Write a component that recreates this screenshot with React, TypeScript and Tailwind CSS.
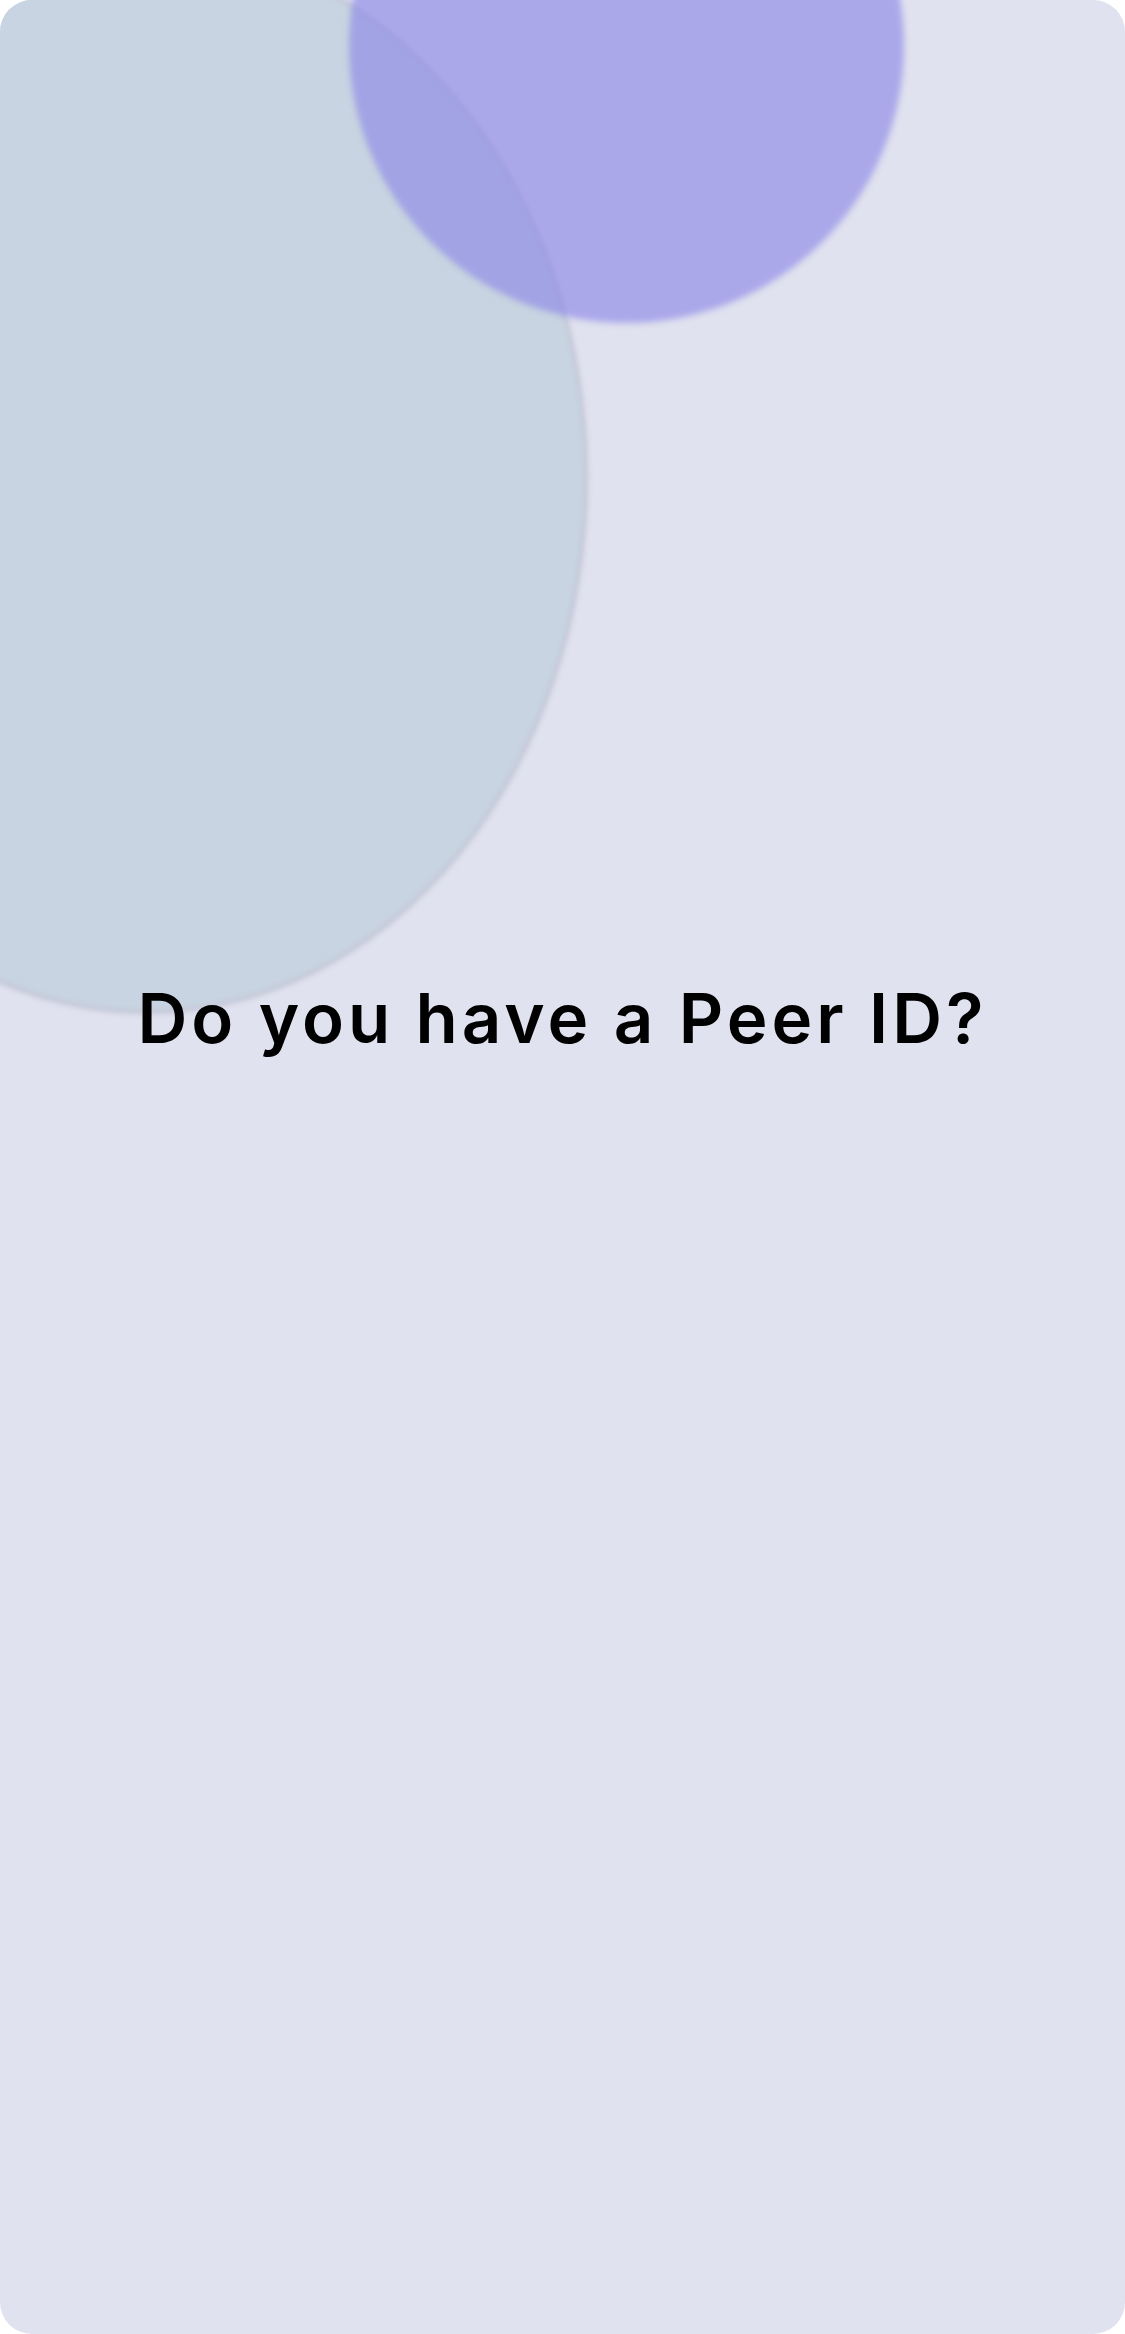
import React from 'react';

const App = () => {
  return (
    <div className="min-h-screen w-full bg-white">
      <div className="relative h-[2334px] w-full overflow-hidden rounded-[32px] bg-[#e0e2ef]">
        {/* Decorative blobs */}
        <div className="absolute left-[-296px] top-[-58px] h-[1072px] w-[884px] rounded-[50%] border-[4px] border-[#c3c5d5] bg-[#c8d4e1] blur-[2.5px]" />
        <div className="absolute left-[349px] top-[-232px] h-[555px] w-[555px] rounded-full bg-[rgba(139,135,231,0.63)] blur-[3px]" />

        {/* Content */}
        <div className="relative flex flex-col items-center pt-[984px]">
          <h1
            className="text-[69px] font-semibold leading-none tracking-[4px] text-black"
            style={{ fontFamily: 'Inter, "Open Sans", sans-serif' }}
          >
            Do you have a Peer ID?
          </h1>
        </div>
      </div>
    </div>
  );
};

export default App;
